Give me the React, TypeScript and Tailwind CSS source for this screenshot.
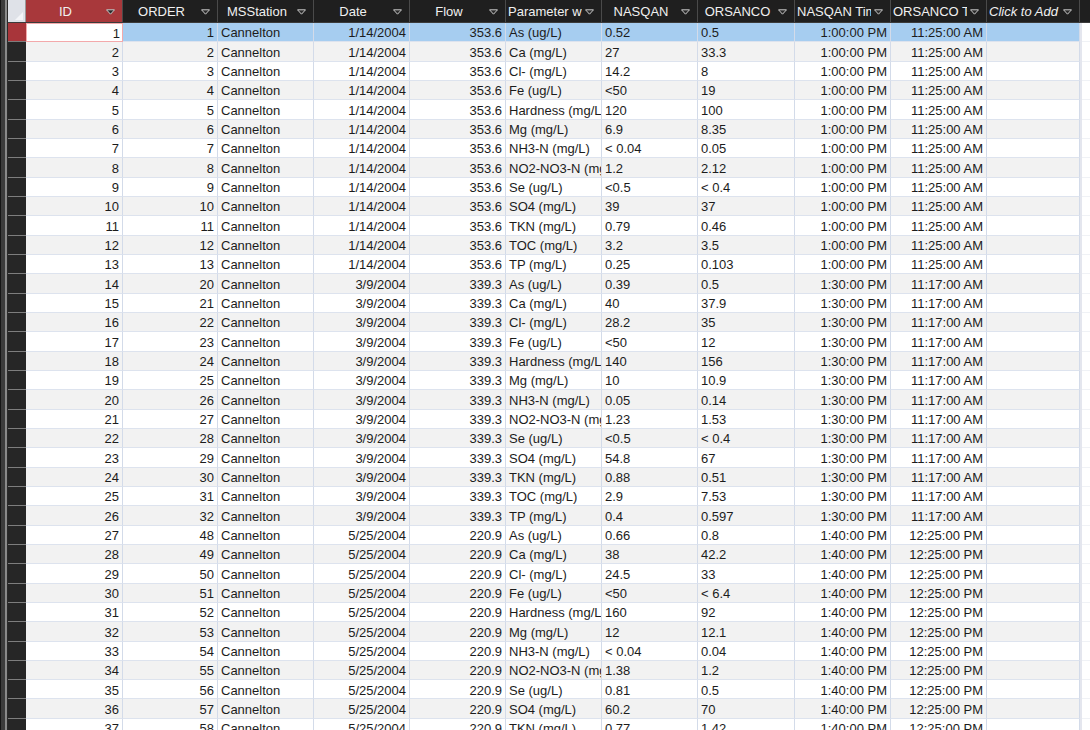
import React from 'react';

type Col = {
  key: string;
  label: string;
  width: string;
  align: 'left' | 'right';
  head: 'center' | 'left';
  italic?: boolean;
};

const cols: Col[] = [
  { key: 'id', label: 'ID', width: 'w-[97px]', align: 'right', head: 'center' },
  { key: 'order', label: 'ORDER', width: 'w-[95px]', align: 'right', head: 'center' },
  { key: 'station', label: 'MSStation', width: 'w-[96px]', align: 'left', head: 'center' },
  { key: 'date', label: 'Date', width: 'w-[96px]', align: 'right', head: 'center' },
  { key: 'flow', label: 'Flow', width: 'w-[96px]', align: 'right', head: 'center' },
  { key: 'param', label: 'Parameter with units', width: 'w-[96px]', align: 'left', head: 'left' },
  { key: 'nasqan', label: 'NASQAN', width: 'w-[96px]', align: 'left', head: 'center' },
  { key: 'orsanco', label: 'ORSANCO', width: 'w-[97px]', align: 'left', head: 'center' },
  { key: 'nTime', label: 'NASQAN Time', width: 'w-[96px]', align: 'right', head: 'left' },
  { key: 'oTime', label: 'ORSANCO Time', width: 'w-[96px]', align: 'right', head: 'left' },
  { key: 'add', label: 'Click to Add', width: 'w-[93px]', align: 'left', head: 'left', italic: true },
];

const params = [
  'As (ug/L)',
  'Ca (mg/L)',
  'Cl- (mg/L)',
  'Fe (ug/L)',
  'Hardness (mg/L)',
  'Mg (mg/L)',
  'NH3-N (mg/L)',
  'NO2-NO3-N (mg/L)',
  'Se (ug/L)',
  'SO4 (mg/L)',
  'TKN (mg/L)',
  'TOC (mg/L)',
  'TP (mg/L)',
];

const samples = [
  {
    date: '1/14/2004', flow: '353.6', nTime: '1:00:00 PM', oTime: '11:25:00 AM', start: 1,
    vals: [['0.52', '0.5'], ['27', '33.3'], ['14.2', '8'], ['<50', '19'], ['120', '100'], ['6.9', '8.35'], ['< 0.04', '0.05'], ['1.2', '2.12'], ['<0.5', '< 0.4'], ['39', '37'], ['0.79', '0.46'], ['3.2', '3.5'], ['0.25', '0.103']],
  },
  {
    date: '3/9/2004', flow: '339.3', nTime: '1:30:00 PM', oTime: '11:17:00 AM', start: 20,
    vals: [['0.39', '0.5'], ['40', '37.9'], ['28.2', '35'], ['<50', '12'], ['140', '156'], ['10', '10.9'], ['0.05', '0.14'], ['1.23', '1.53'], ['<0.5', '< 0.4'], ['54.8', '67'], ['0.88', '0.51'], ['2.9', '7.53'], ['0.4', '0.597']],
  },
  {
    date: '5/25/2004', flow: '220.9', nTime: '1:40:00 PM', oTime: '12:25:00 PM', start: 48,
    vals: [['0.66', '0.8'], ['38', '42.2'], ['24.5', '33'], ['<50', '< 6.4'], ['160', '92'], ['12', '12.1'], ['< 0.04', '0.04'], ['1.38', '1.2'], ['0.81', '0.5'], ['60.2', '70'], ['0.77', '1.42']],
  },
];

type Row = Record<string, string>;

const rows: Row[] = [];
samples.forEach((s) => {
  s.vals.forEach((v, i) => {
    rows.push({
      id: String(rows.length + 1),
      order: String(s.start + i),
      station: 'Cannelton',
      date: s.date,
      flow: s.flow,
      param: params[i],
      nasqan: v[0],
      orsanco: v[1],
      nTime: s.nTime,
      oTime: s.oTime,
      add: '',
    });
  });
});

const Arrow = () => (
  <svg width="9" height="6" viewBox="0 0 9 6" className="shrink-0">
    <polygon points="0.5,0.8 8.5,0.8 4.5,5.2" fill="#2a2a2a" stroke="#c9c9c9" strokeWidth="1" />
  </svg>
);

const LeftStrip = () => (
  <div className="flex h-full shrink-0">
    <div className="w-px bg-[#161616]" />
    <div className="w-[4px] bg-[#3c3c3c]" />
    <div className="w-[2px] bg-[#8a8a8a]" />
    <div className="w-px bg-[#2a2a2a]" />
  </div>
);

export default function App() {
  return (
    <div
      className="w-[1090px] h-[730px] overflow-hidden bg-white flex text-[13px] text-[#1c1c1c]"
      style={{ fontFamily: '"Liberation Sans", Arial, sans-serif' }}
    >
      <LeftStrip />
      <div className="flex-1 flex flex-col min-w-0">
        {/* header */}
        <div className="flex h-[23px] shrink-0 bg-[#1f1f1f] border-b border-[#3b3b3b]">
          <div className="w-[18px] shrink-0 bg-[#dfe2e8] border-r border-[#9a9a9a] flex items-end justify-end p-[2px]">
            <svg width="8" height="8" viewBox="0 0 8 8">
              <polygon points="8,0 8,8 0,8" fill="#f4f5f8" />
            </svg>
          </div>
          {cols.map((c) => (
            <div
              key={c.key}
              className={`${c.width} shrink-0 flex items-center pt-[2px] pl-[2px] pr-[7px] gap-[3px] border-r border-[#4a4a4a] text-[#f0f0f0] ${
                c.key === 'id' ? 'bg-[#a8383b]' : ''
              }`}
            >
              <div
                className={`flex-1 overflow-hidden whitespace-nowrap ${c.head === 'center' ? 'text-center' : 'text-left'} ${
                  c.italic ? 'italic' : ''
                }`}
              >
                {c.label}
              </div>
              <Arrow />
            </div>
          ))}
          <div className="flex-1" />
        </div>

        {/* rows */}
        {rows.map((r, ri) => {
          const selected = ri === 0;
          const alt = ri % 2 === 1;
          return (
            <div key={ri} className="flex h-[19.33px] shrink-0">
              <div
                className={`w-[18px] shrink-0 border-b border-[#7d7d7d] ${selected ? 'bg-[#a8353a]' : 'bg-[#262626]'}`}
              />
              {cols.map((c) => {
                const focus = selected && c.key === 'id';
                let bg = alt ? 'bg-[#f2f2f2]' : 'bg-white';
                if (selected) bg = focus ? 'bg-white' : 'bg-[#a6cdf0]';
                return (
                  <div
                    key={c.key}
                    className={`${c.width} shrink-0 overflow-hidden whitespace-nowrap flex items-center pt-[2px] ${bg} ${
                      focus
                        ? 'border-[1.5px] border-[#f3a9ab] justify-end pr-[2px]'
                        : `border-r border-b border-r-[#d3dbe9] border-b-[#dde3ee] ${
                            c.align === 'right' ? 'justify-end pr-[3px]' : 'justify-start pl-[3px]'
                          }`
                    }`}
                  >
                    {r[c.key]}
                  </div>
                );
              })}
              <div className="w-[2px] shrink-0 bg-[#e4e6ee]" />
              <div className="flex-1 bg-white border-b border-[#f0f2f6]" />
            </div>
          );
        })}
      </div>
    </div>
  );
}
